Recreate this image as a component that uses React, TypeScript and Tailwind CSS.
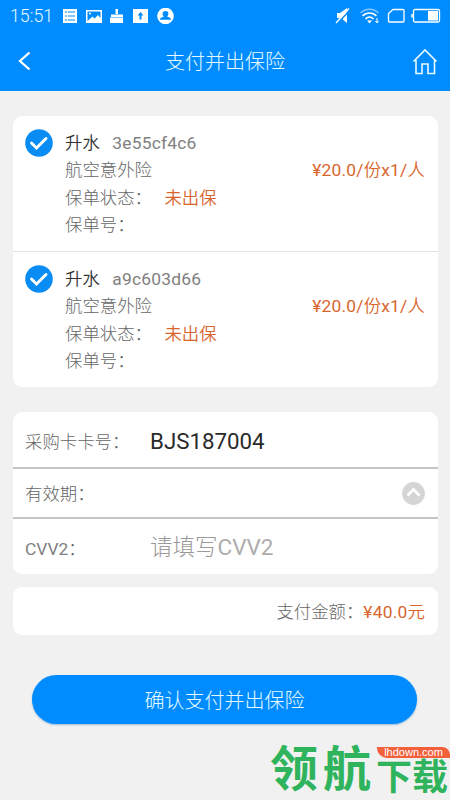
import type { ReactNode } from "react";

const policies = [
  { id: "3e55cf4c6", name: "升水", product: "航空意外险", status: "未出保", price: "¥20.0/份x1/人" },
  { id: "a9c603d66", name: "升水", product: "航空意外险", status: "未出保", price: "¥20.0/份x1/人" },
];

function StatusBar() {
  return (
    <div className="flex h-[31px] items-center pl-[10px] pr-[9px]">
      <span className="w-[52px] text-[17.800px] font-[350] leading-[31px]">15:51</span>
      <svg width="112" height="16" viewBox="0 0 112 16" fill="white">
        {/* list */}
        <path d="M1 1h14v14H1z" />
        <path d="M3 4h2M6 4h7M3 8h2M6 8h7M3 12h2M6 12h7" stroke="#008cff" strokeWidth="1.1" />
        {/* gallery */}
        <path d="M24 2h16v13H24z" />
        <path d="M25.500 13l5-4.500 2 2 3.500-3.500 2.500 3V3.500h-13z" fill="#008cff" />
        <path d="M27 5.500h2" stroke="white" strokeWidth="1.500" />
        {/* cleaner */}
        <path d="M53.500 1h2.500v5h-2.500zM49 6.500h12v2.500H49zM48 9.500h13V15H48z" />
        {/* upload */}
        <path d="M71 1h15v14H71z" />
        <path d="M78.500 4l3 3.500h-2v4h-2v-4h-2z" fill="#008cff" />
        {/* account */}
        <circle cx="103.500" cy="8" r="8.300" />
        <path d="M103.500 3c4 0 3.300 4.500 1.500 5.500 1.500 1 4 .8 4 3.300H98c0-2.500 2.500-2.300 4-3.300-1.800-1-2.500-5.500 1.500-5.500z" fill="#008cff" />
      </svg>
      <svg className="ml-auto" width="106" height="18" viewBox="0 0 106 18" fill="none" stroke="white">
        {/* muted speaker */}
        <path d="M2 6h3l7-5v15l-6-5H2z" fill="white" stroke="none" />
        <path d="M2 17.500L15 2.500" stroke="#008cff" strokeWidth="1.500" />
        <path d="M1 16L14 1.500" strokeWidth="1.300" />
        {/* wifi */}
        <path d="M25.500 6c5-5 13-5 18 0" strokeOpacity=".5" strokeWidth="1.300" />
        <path d="M27.500 9c4-4 10-4 14 0M30.500 12c2.500-2.500 5.500-2.500 8 0" strokeWidth="1.600" />
        <path d="M32 13.500h5l-2.500 3z" fill="white" stroke="none" />
        <path d="M42 11v5M40.500 14l1.500 2 1.500-2" strokeWidth="1" />
        {/* sim */}
        <path d="M58 2.500h10a1 1 0 0 1 1 1v10.500a1 1 0 0 1-1 1H54.500a1 1 0 0 1-1-1V6.500z" strokeWidth="1.300" />
        {/* battery */}
        <rect x="78.500" y="2.500" width="26" height="12.500" rx="1.500" strokeWidth="1.300" />
        <path d="M77 7v3.500" strokeWidth="1.500" />
        <path d="M93 4h10v9.500H93z" fill="white" stroke="none" />
      </svg>
    </div>
  );
}

function Header() {
  return (
    <header className="h-[91px] bg-[#008cff] text-[#e6faff]">
      <StatusBar />
      <div className="flex h-[60px] items-center pl-[18px] pr-[12px]">
        <svg width="26" height="20" viewBox="0 0 26 20" fill="none" stroke="white" strokeWidth="2.300">
          <path d="M11.500 1.500L2 10l9.500 8.500" />
        </svg>
        <h1 className="ml-[-6px] flex-1 pt-[2px] text-center text-[20px] font-light">支付并出保险</h1>
        <svg width="26" height="27" viewBox="0 0 26 27" fill="none" stroke="currentColor" strokeWidth="1.600">
          <path d="M1.500 13.500L13 2l11.500 11.500M4 12v13.500h6V16h6v9.500h6.500V12" />
        </svg>
      </div>
    </header>
  );
}

function Card({ className, children }: { className: string; children: ReactNode }) {
  return <section className={`mx-[12.500px] overflow-hidden rounded-[9px] bg-white ${className}`}>{children}</section>;
}

function CheckMark() {
  return (
    <svg className="mt-[-1px] shrink-0" width="28" height="28" viewBox="0 0 28 28" fill="none">
      <circle cx="14" cy="14" r="13.800" fill="#0a8cf5" />
      <path d="M6.500 14l5 5L21 9.500" stroke="white" strokeWidth="3" strokeLinecap="round" />
    </svg>
  );
}

// Roboto runs one weight heavier than the Chinese characters around it
function Price({ value }: { value: string }) {
  return (
    <span className="whitespace-nowrap tracking-[0.2px] text-[#d9652e]">
      {value.split(/([\u4e00-\u9fa5]+)/).map((part, i) => (
        <span key={i} className={i % 2 ? "font-[350]" : "font-normal"}>{part}</span>
      ))}
    </span>
  );
}

export default function App() {
  return (
    <div className="relative h-[800px] w-[450px] overflow-hidden bg-[#f1f1f1] font-['Roboto','Noto_Sans_CJK_SC',sans-serif] text-[17.400px] font-light text-[#666]">
      <Header />

      <Card className="mt-[25px] h-[271px]">
        {policies.map((p) => (
          <div key={p.id} className="flex h-[136px] border-b border-[#e2e2e2] px-[12.500px] pt-[13.500px] last:h-[135px] last:border-b-0">
            <CheckMark />
            <div className="ml-[12px] flex-1 leading-[27.500px]">
              <p className="flex">
                <span className="font-[350] text-[#333]">{p.name}</span>
                <span className="ml-[12.500px] font-normal tracking-[0.200px] text-[#808080]">{p.id}</span>
              </p>
              <p className="flex justify-between">
                <span>{p.product}</span>
                <Price value={p.price} />
              </p>
              <p className="flex">
                <span>保单状态：</span>
                <span className="ml-[12.500px] font-[350] text-[#d9652e]">{p.status}</span>
              </p>
              <p>保单号：</p>
            </div>
          </div>
        ))}
      </Card>

      <Card className="mt-[25px] h-[162px]">
        <div className="flex h-[57px] items-center border-b-2 border-[#c4c4c4] px-[12.500px]">
          <span className="w-[125px] pt-[5px]">采购卡卡号：</span>
          <span className="pt-[4px] text-[22.300px] font-normal text-[#2a2a2a]">BJS187004</span>
        </div>
        <div className="flex h-[50px] items-center justify-between border-b-2 border-[#c4c4c4] px-[12.500px]">
          <span className="pt-[2px]">有效期：</span>
          <svg width="23" height="23" viewBox="0 0 23 23" fill="none">
            <circle cx="11.500" cy="11.500" r="11.400" fill="#d5d5d5" />
            <path d="M5.500 13.500l6-6 6 6" stroke="white" strokeWidth="2.800" />
          </svg>
        </div>
        <div className="flex h-[55px] items-center px-[12.500px]">
          <span className="w-[125px] pt-[6px]"><span className="font-normal text-[#808080]">CVV2</span>：</span>
          <span className="pt-[3px] text-[22.500px] text-[#999]">请填写<span className="font-normal text-[#adadad]">CVV2</span></span>
        </div>
      </Card>

      <Card className="mt-[13px] flex h-[48px] items-center justify-end px-[12.500px] pt-[2px]">
        <span>支付金额：</span>
        <Price value="¥40.0元" />
      </Card>

      <button className="ml-[32px] mt-[40px] block h-[49px] w-[385px] rounded-full bg-[#008cff] pt-[2px] text-[20px] font-light text-[#e6faff] shadow-[0_1px_2px_#99bcd8]">
        确认支付并出保险
      </button>

      {/* site watermark */}
      <div className="absolute left-[270px] top-[742px] flex whitespace-nowrap font-bold text-[#2fb35c]">
        <span className="w-[106px] shrink-0 text-[48px] leading-[56px] tracking-[5px]">领航</span>
        <span className="pt-[17px] text-[36px] leading-[38px]">下载</span>
      </div>
      <div className="absolute left-[377px] top-[747px] h-[11px] w-[73px] rounded-bl-[10px] rounded-tr-[8px] bg-[#f2603c] text-center font-['Liberation_Sans',sans-serif] text-[11px] font-normal leading-[11px] text-white">
        lhdown.com
      </div>
    </div>
  );
}
